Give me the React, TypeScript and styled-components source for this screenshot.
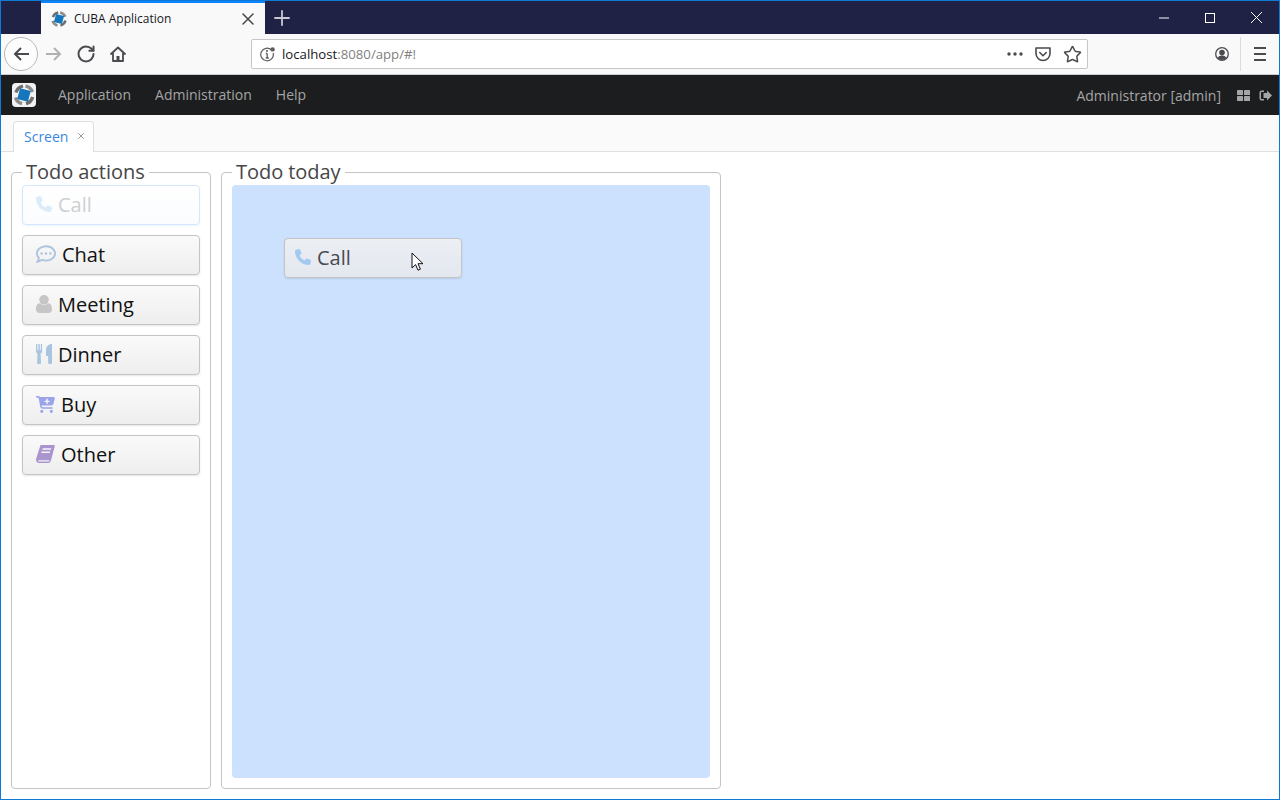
import React from 'react';
import styled, { createGlobalStyle } from 'styled-components';
import { Plus, RotateCw, Star, X } from 'lucide-react';
import { FaCartPlus, FaPhone, FaRegCommentDots } from 'react-icons/fa6';

const GlobalStyle = createGlobalStyle`
  html, body {
    margin: 0;
    height: 100%;
    overflow: hidden;
    background: #fff;
    font-family: "Open Sans", "Liberation Sans", sans-serif;
  }
`;

const Window = styled.div`
  position: relative;
  box-sizing: border-box;
  width: 1280px;
  height: 800px;
  border: 1px solid #0f7ad6;
  display: flex;
  flex-direction: column;
  background: #fff;
`;

const TitleBar = styled.div`
  height: 33px;
  flex: none;
  display: flex;
  background: #1f2244;
  padding-left: 40px;
`;

const BrowserTab = styled.div`
  box-sizing: border-box;
  width: 224px;
  border-top: 2px solid #0a84ff;
  background: #f9f9fa;
  display: flex;
  align-items: center;
  padding: 0 7px 0 9px;
  font-size: 12px;
  color: #17171a;
  svg.close { margin-left: auto; color: #444; }
`;

const TabTitle = styled.span`
  margin-left: 6px;
`;

const NewTab = styled.div`
  width: 34px;
  display: flex;
  align-items: center;
  justify-content: center;
  color: #c8c9d2;
`;

const WindowControls = styled.div`
  margin-left: auto;
  display: flex;
  color: #fff;
`;

const WindowControl = styled.div`
  width: 46px;
  display: flex;
  align-items: center;
  justify-content: center;
`;

const NavBar = styled.div`
  box-sizing: border-box;
  height: 41px;
  flex: none;
  display: flex;
  align-items: center;
  background: #f9f9fa;
  border-bottom: 1px solid #cfcfd1;
  padding-left: 3px;
  color: #4a4a4f;
`;

const BackButton = styled.div`
  box-sizing: border-box;
  width: 34px;
  height: 34px;
  border-radius: 50%;
  border: 1px solid #b8b8ba;
  background: #fdfdfd;
  display: flex;
  align-items: center;
  justify-content: center;
`;

const NavIcon = styled.div<{ $muted?: boolean }>`
  width: 32px;
  display: flex;
  justify-content: center;
  color: ${p => (p.$muted ? '#b1b1b3' : '#4a4a4f')};
`;

const UrlBar = styled.div`
  box-sizing: border-box;
  width: 837px;
  height: 30px;
  margin-left: 117px;
  display: flex;
  align-items: center;
  gap: 7px;
  padding: 0 5px 0 8px;
  background: #fff;
  border: 1px solid #c6c6c8;
  border-radius: 2px;
  font-size: 13.2px;
`;

const UrlText = styled.div`
  flex: 1;
  color: #17171a;
  span { color: #7f7f82; }
`;

const UrlActions = styled.div`
  display: flex;
  align-items: center;
  gap: 12px;
`;

const NavRight = styled.div`
  margin-left: auto;
  display: flex;
  align-items: center;
  height: 34px;
  padding-right: 3px;
`;

const NavSeparator = styled.div`
  width: 1px;
  height: 34px;
  background: #dcdcde;
  margin: 0 3px 0 11px;
`;

const AppMenu = styled.div`
  box-sizing: border-box;
  height: 40px;
  flex: none;
  display: flex;
  align-items: center;
  background: #1c1d1f;
  padding: 0 7px 0 11px;
  font-size: 14px;
  color: #a5a5a5;
`;

const MenuItems = styled.div`
  display: flex;
  gap: 24px;
  margin-left: 22px;
  padding-bottom: 2px;
`;

const UserName = styled.div`
  margin-left: auto;
  margin-right: 16px;
`;

const MenuIcons = styled.div`
  display: flex;
  align-items: center;
  gap: 9px;
`;

const TabBar = styled.div`
  box-sizing: border-box;
  height: 37px;
  flex: none;
  display: flex;
  align-items: flex-end;
  background: #fafafa;
  border-bottom: 1px solid #dfdfdf;
  padding-left: 12px;
`;

const ScreenTab = styled.div`
  box-sizing: border-box;
  width: 81px;
  height: 31px;
  margin-bottom: -1px;
  display: flex;
  align-items: center;
  justify-content: space-between;
  padding: 0 7px 2px 10px;
  background: #fff;
  border: 1px solid #dfdfdf;
  border-bottom: none;
  border-radius: 4px 4px 0 0;
  font-size: 14px;
  color: #3b87e0;
`;

const Content = styled.div`
  flex: 1;
  min-height: 0;
  display: flex;
  gap: 10px;
  padding: 7px 10px 10px;
`;

const Group = styled.fieldset<{ $width: number }>`
  box-sizing: border-box;
  width: ${p => p.$width}px;
  margin: 0;
  padding: 0 10px 10px;
  border: 1px solid #c4c4c4;
  border-radius: 4px;
  min-width: 0;
  display: flex;
  flex-direction: column;
  gap: 10px;
`;

const Legend = styled.legend`
  margin-left: 0;
  padding: 0 4px;
  font-size: 20px;
  line-height: 26px;
  letter-spacing: -0.05px;
  color: #464646;
`;

const Button = styled.div<{ $ghost?: boolean }>`
  box-sizing: border-box;
  width: 178px;
  height: 40px;
  flex: none;
  display: flex;
  align-items: center;
  gap: 6px;
  padding: 0 0 2px 13px;
  border: 1px solid ${p => (p.$ghost ? '#d4e6fb' : '#c4c4c4')};
  border-radius: 4px;
  background: ${p => (p.$ghost ? 'linear-gradient(#ffffff, #fafcfe)' : 'linear-gradient(#fafafa, #eeeeee)')};
  box-shadow: ${p => (p.$ghost ? '0 1px 2px rgba(190, 220, 250, 0.3)' : '0 1px 2px rgba(0, 0, 0, 0.1)')};
  font-size: 20px;
  color: ${p => (p.$ghost ? '#cfcfcf' : '#111')};
`;

const DropArea = styled.div`
  flex: 1;
  position: relative;
  border-radius: 4px;
  background: #cbe1fd;
`;

const DraggedButton = styled(Button)`
  position: absolute;
  left: 52px;
  top: 53px;
  padding-left: 10px;
  background: linear-gradient(#eceff4, #e3e7ef);
  color: #464a50;
`;

const Cursor = styled.svg`
  position: absolute;
  left: 179px;
  top: 67px;
`;

const IconBox = styled.span<{ $color: string }>`
  display: inline-flex;
  color: ${p => p.$color};
`;

const CubaLogo: React.FC<{ size: number; tile?: boolean }> = ({ size, tile }) => (
  <svg width={size} height={size} viewBox="0 0 24 24">
    {tile && <rect width="24" height="24" rx="4" fill="#f2f2f2" />}
    <g fill="none" strokeWidth="3.4" strokeLinecap="butt">
      <path d="M4 9.5A9 9 0 0 1 11 3.2" stroke="#6e6e6e" />
      <path d="M13.5 3.2A9 9 0 0 1 20.4 9" stroke="#8d8d8d" />
      <path d="M20.6 14A9 9 0 0 1 14 20.6" stroke="#6e6e6e" />
      <path d="M10 20.7A9 9 0 0 1 3.5 14.5" stroke="#8d8d8d" />
    </g>
    <rect x="6.5" y="6.5" width="11" height="11" fill="#1476bd" transform="rotate(15 12 12)" />
  </svg>
);

const LineArrow: React.FC<{ flip?: boolean }> = ({ flip }) => (
  <svg width="16" height="14" viewBox="0 0 16 14" fill="none" stroke="currentColor" strokeWidth="2" style={flip ? { transform: 'scaleX(-1)' } : undefined}>
    <path d="M16 7H2M8 1L2 7l6 6" />
  </svg>
);

const HomeIcon: React.FC = () => (
  <svg width="16" height="16" viewBox="0 0 16 16" fill="none" stroke="currentColor" strokeWidth="1.8" strokeLinejoin="round">
    <path d="M1 8l7-6.5L15 8" strokeLinecap="round" />
    <path d="M3 7v8h10V7" />
    <rect x="6.5" y="10" width="3" height="5" fill="currentColor" stroke="none" />
  </svg>
);

const InfoIcon: React.FC = () => (
  <svg width="15" height="15" viewBox="0 0 15 15" fill="none" stroke="#5c5c5f">
    <path d="M11.5 3A6.3 6.3 0 1 0 13.2 6" strokeWidth="1.2" />
    <path d="M7.2 6.5v4.5M5.8 11h3M5.8 6.5h1.4" strokeWidth="1.3" />
    <circle cx="7" cy="4" r="1" fill="#5c5c5f" stroke="none" />
    <circle cx="12.6" cy="2.4" r="2.2" fill="#5c5c5f" stroke="none" />
  </svg>
);

const DotsIcon: React.FC = () => (
  <svg width="16" height="4" viewBox="0 0 16 4" fill="currentColor">
    <circle cx="2" cy="2" r="1.7" />
    <circle cx="8" cy="2" r="1.7" />
    <circle cx="14" cy="2" r="1.7" />
  </svg>
);

const PocketIcon: React.FC = () => (
  <svg width="16" height="16" viewBox="0 0 16 16" fill="none" stroke="#4a4a4f" strokeWidth="1.6">
    <path d="M1 2h14v5.5a7 7 0 0 1-14 0z" strokeLinejoin="round" />
    <path d="M4.8 6.5L8 9.7l3.2-3.2" strokeLinecap="round" strokeLinejoin="round" />
  </svg>
);

const ProfileIcon: React.FC = () => (
  <svg width="14" height="14" viewBox="0 0 14 14">
    <circle cx="7" cy="7" r="6.3" fill="none" stroke="#4a4a4f" strokeWidth="1.3" />
    <circle cx="7" cy="5.6" r="2.8" fill="#4a4a4f" />
    <path d="M2.6 11c1-2 2.6-2.6 4.4-2.6s3.400.6 4.400 2.600A6 6 0 0 1 7 13a6 6 0 0 1-4.400-2z" fill="#4a4a4f" />
  </svg>
);

const HamburgerIcon: React.FC = () => (
  <svg width="12" height="14" viewBox="0 0 12 14" fill="currentColor">
    <rect y="0" width="12" height="2" />
    <rect y="6" width="12" height="2" />
    <rect y="12" width="12" height="2" />
  </svg>
);

const GridIcon: React.FC = () => (
  <svg width="13" height="11" viewBox="0 0 13 11" fill="#a5a5a5">
    <rect width="6" height="5" rx=".6" />
    <rect x="7" width="6" height="5" rx=".6" />
    <rect y="6" width="6" height="5" rx=".6" />
    <rect x="7" y="6" width="6" height="5" rx=".6" />
  </svg>
);

const SignOutIcon: React.FC = () => (
  <svg width="13" height="11" viewBox="0 0 13 11" fill="#a5a5a5">
    <path d="M5 .5H2.500A2 2 0 0 0 .5 2.500v6a2 2 0 0 0 2 2H5V9H2.500a.5.5 0 0 1-.5-.5v-6a.5.500 0 0 1 .5-.5H5z" />
    <path d="M8 .5L13 5.500 8 10.500V8H4.500V3H8z" />
  </svg>
);

const UserIcon: React.FC = () => (
  <svg width="16" height="18" viewBox="0 0 16 18" fill="currentColor">
    <circle cx="8" cy="4.800" r="4.800" />
    <path d="M0 14.500c0-3 .8-6 3.500-6.300a6.500 6.500 0 0 0 9 0c2.700.3 3.500 3.300 3.500 6.300 0 2.200-1.400 3.500-3.200 3.500H3.200C1.400 18 0 16.700 0 14.500z" />
  </svg>
);

const CutleryIcon: React.FC = () => (
  <svg width="16" height="20" viewBox="0 0 16 20" fill="currentColor">
    <path d="M0 0h1.300v6h1V0h1.500v6h1V0h1.300v7.500A2 2 0 0 1 4.600 9.400l.4 9.600a1 1 0 0 1-1 1H2.100a1 1 0 0 1-1-1l.4-9.600A2 2 0 0 1 0 7.500z" />
    <path d="M16 0v19a1 1 0 0 1-1 1h-1.800a1 1 0 0 1-1-1v-7H10V5.500C10 2.500 12.500 0 16 0z" />
  </svg>
);

const BookIcon: React.FC = () => (
  <svg width="19" height="18" viewBox="0 0 19 18" fill="currentColor">
    <path fillRule="evenodd" d="M4.500 0H17.800a1 1 0 0 1 1 1.300L14.800 16a2.700 2.700 0 0 1-2.600 2H3C1.200 18 0 16.500 0 15c0-.6.100-1.100.3-1.700zM6.700 3.300l-.4 1.400h8.500l.4-1.400zM5.700 6.500l-.4 1.400h8.500l.4-1.400zM3 15.200c-.6 0-1 .3-1 .6s.4.600 1 .6h9.500c.6 0 1-.3 1-.6l.1-.6z" />
  </svg>
);

const actions = [
  { label: 'Chat', icon: <FaRegCommentDots size={20} />, color: '#aec4de' },
  { label: 'Meeting', icon: <UserIcon />, color: '#c6c6c6' },
  { label: 'Dinner', icon: <CutleryIcon />, color: '#a9c4de' },
  { label: 'Buy', icon: <FaCartPlus size={19} />, color: '#9ba4ea' },
  { label: 'Other', icon: <BookIcon />, color: '#ab95cf' },
];

export default function App() {
  return (
    <>
      <GlobalStyle />
      <Window>
        <TitleBar>
          <BrowserTab>
            <CubaLogo size={18} />
            <TabTitle>CUBA Application</TabTitle>
            <X className="close" size={20} strokeWidth={1.8} />
          </BrowserTab>
          <NewTab><Plus size={24} strokeWidth={1.8} /></NewTab>
          <WindowControls>
            <WindowControl>
              <svg width="10" height="10" viewBox="0 0 10 10" stroke="#fff"><path d="M0 5h10" /></svg>
            </WindowControl>
            <WindowControl>
              <svg width="10" height="10" viewBox="0 0 10 10" fill="none" stroke="#fff"><rect x=".5" y=".5" width="9" height="9" /></svg>
            </WindowControl>
            <WindowControl>
              <svg width="11" height="11" viewBox="0 0 11 11" stroke="#fff"><path d="M0 0l11 11M11 0L0 11" /></svg>
            </WindowControl>
          </WindowControls>
        </TitleBar>
        <NavBar>
          <BackButton><LineArrow /></BackButton>
          <NavIcon $muted><LineArrow flip /></NavIcon>
          <NavIcon><RotateCw size={20} strokeWidth={2.4} /></NavIcon>
          <NavIcon><HomeIcon /></NavIcon>
          <UrlBar>
            <InfoIcon />
            <UrlText>localhost<span>:8080/app/#!</span></UrlText>
            <UrlActions>
              <DotsIcon />
              <PocketIcon />
              <Star size={19} strokeWidth={1.9} />
            </UrlActions>
          </UrlBar>
          <NavRight>
            <ProfileIcon />
            <NavSeparator />
            <NavIcon><HamburgerIcon /></NavIcon>
          </NavRight>
        </NavBar>
        <AppMenu>
          <CubaLogo size={24} tile />
          <MenuItems>
            <span>Application</span>
            <span>Administration</span>
            <span>Help</span>
          </MenuItems>
          <UserName>Administrator [admin]</UserName>
          <MenuIcons>
            <GridIcon />
            <SignOutIcon />
          </MenuIcons>
        </AppMenu>
        <TabBar>
          <ScreenTab>
            Screen
            <X size={10} color="#9a9a9a" strokeWidth={2.4} />
          </ScreenTab>
        </TabBar>
        <Content>
          <Group $width={200}>
            <Legend>Todo actions</Legend>
            <Button $ghost>
              <IconBox $color="#dcebfa"><FaPhone size={16} /></IconBox>
              Call
            </Button>
            {actions.map(a => (
              <Button key={a.label}>
                <IconBox $color={a.color}>{a.icon}</IconBox>
                {a.label}
              </Button>
            ))}
          </Group>
          <Group $width={500}>
            <Legend>Todo today</Legend>
            <DropArea>
              <DraggedButton>
                <IconBox $color="#a4c9f0"><FaPhone size={16} /></IconBox>
                Call
              </DraggedButton>
              <Cursor width="14" height="20" viewBox="0 0 14 20">
                <path d="M1 1v15l3.600-3.400 2.400 5.600 2.400-1-2.400-5.500H12z" fill="#fff" stroke="#111" strokeWidth="1" strokeLinejoin="round" />
              </Cursor>
            </DropArea>
          </Group>
        </Content>
      </Window>
    </>
  );
}
